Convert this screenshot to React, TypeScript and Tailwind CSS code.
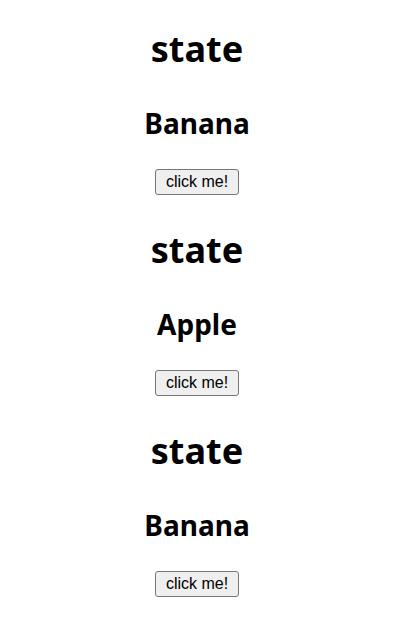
const items = ['Banana', 'Apple', 'Banana'];

function Block({ fruit }: { fruit: string }) {
  return (
    <div className="flex flex-col items-center">
      <h1 className="mb-[35px] text-[36px] font-bold leading-[44px] text-black">state</h1>
      <h2 className="mb-[29px] text-[28px] font-bold leading-[34px] text-black">{fruit}</h2>
      <button
        type="button"
        className="h-[26px] w-[84px] rounded-[3px] border border-[#767676] bg-[#efefef] px-[6px] text-[16px] leading-none text-black"
        style={{ fontFamily: '"Liberation Sans", Arial, sans-serif' }}
      >
        click me!
      </button>
    </div>
  );
}

export default function App() {
  return (
    <div
      className="flex min-h-[640px] flex-col gap-[33px] bg-white pr-[10px] pt-[27px]"
      style={{ fontFamily: '"Noto Sans", "Open Sans", sans-serif' }}
    >
      {items.map((f, i) => (
        <Block key={i} fruit={f} />
      ))}
    </div>
  );
}
